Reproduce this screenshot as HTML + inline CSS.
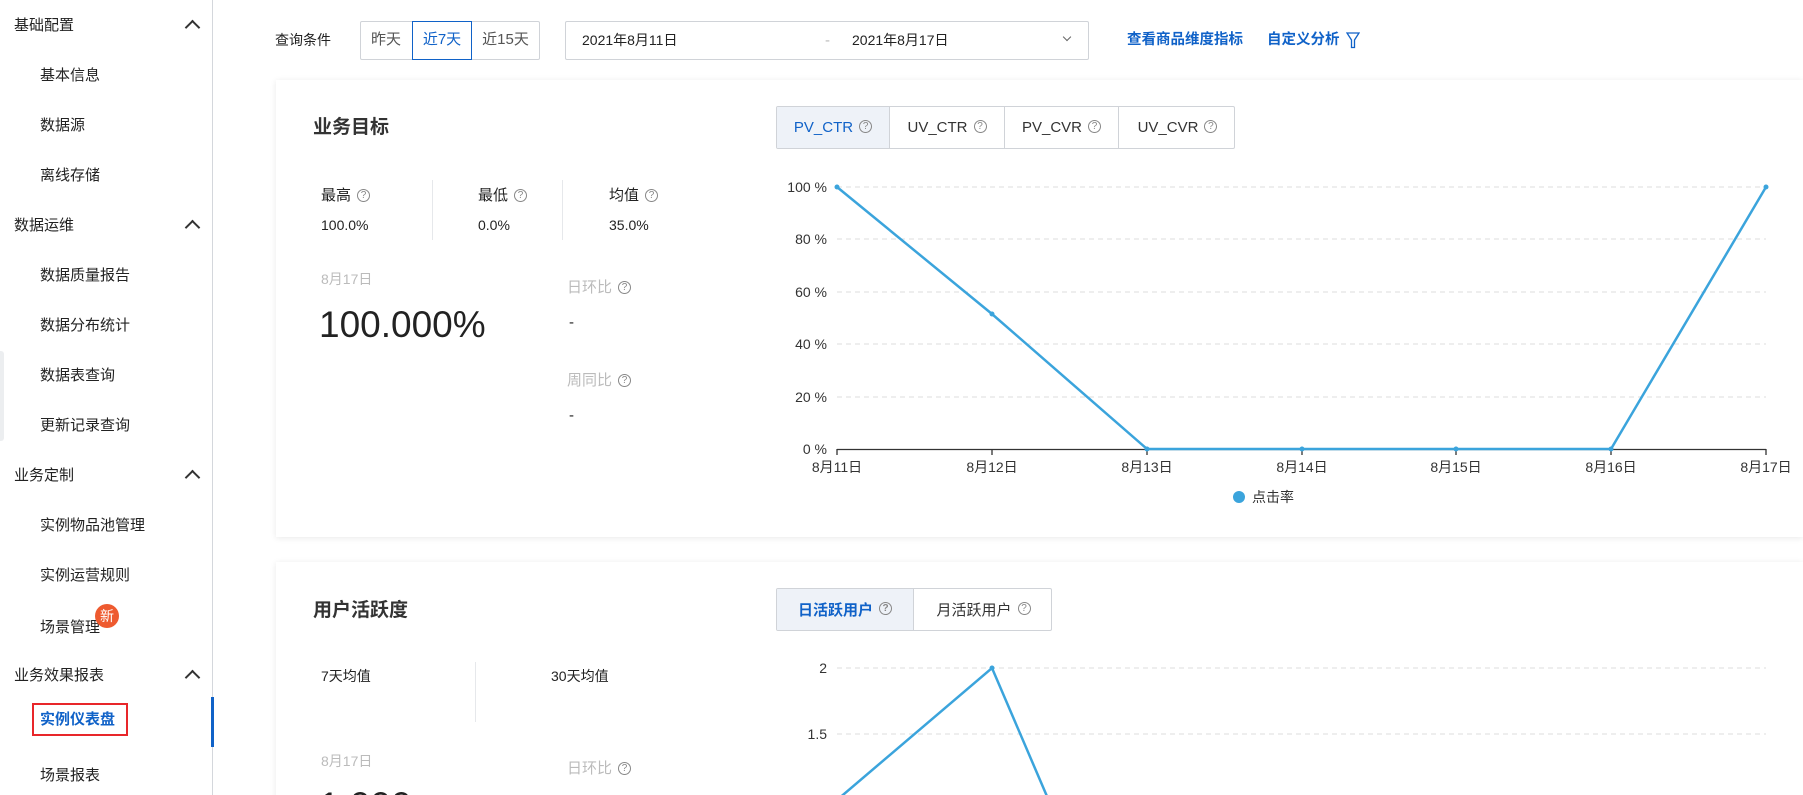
<!DOCTYPE html>
<html><head><meta charset="utf-8"><style>
*{margin:0;padding:0;box-sizing:border-box}
html,body{width:1803px;height:795px;overflow:hidden}
body{background:#fff;font-family:"Liberation Sans","Noto Sans CJK SC",sans-serif;color:#333;font-size:15px}
#w{position:relative;width:1803px;height:795px;overflow:hidden}
.a{position:absolute;white-space:nowrap;line-height:1}
.g{color:#222}
.chev{position:absolute;width:11px;height:11px;border-left:2px solid #333;border-top:2px solid #333;transform:rotate(45deg)}
.q{display:inline-block;width:13px;height:13px;border:1px solid #888;border-radius:50%;font-size:10px;line-height:11px;text-align:center;color:#888;vertical-align:middle;margin-left:6px;position:relative;top:-1px}
.card{position:absolute;left:276px;right:0;background:#fff;box-shadow:0 1px 6px rgba(0,0,0,0.09)}
.tab{position:absolute;top:0;height:100%;border-right:1px solid #d0d3d8;text-align:center;font-size:15px;color:#333;display:flex;align-items:center;justify-content:center}
.tabs{position:absolute;border:1px solid #d0d3d8;border-radius:2px;overflow:hidden}
.act{background:#eef2f8;color:#1062c8}
</style></head><body><div id="w">
<div class="card" style="top:80px;height:457px"></div>
<div class="card" style="top:562px;height:260px"></div>
<!-- sidebar -->
<div style="position:absolute;left:212px;top:0;width:1px;height:795px;background:#d4d7dc"></div>
<div style="position:absolute;left:211px;top:697px;width:3px;height:50px;background:#1062c8"></div>
<div style="position:absolute;left:0;top:351px;width:4px;height:90px;background:#eceef0;border-radius:0 3px 3px 0"></div>
<div class="a g" style="left:14px;top:18px">基础配置</div><div class="chev" style="left:187px;top:22px"></div>
<div class="a g" style="left:40px;top:68px">基本信息</div>
<div class="a g" style="left:40px;top:118px">数据源</div>
<div class="a g" style="left:40px;top:168px">离线存储</div>
<div class="a g" style="left:14px;top:218px">数据运维</div><div class="chev" style="left:187px;top:222px"></div>
<div class="a g" style="left:40px;top:268px">数据质量报告</div>
<div class="a g" style="left:40px;top:318px">数据分布统计</div>
<div class="a g" style="left:40px;top:368px">数据表查询</div>
<div class="a g" style="left:40px;top:418px">更新记录查询</div>
<div class="a g" style="left:14px;top:468px">业务定制</div><div class="chev" style="left:187px;top:472px"></div>
<div class="a g" style="left:40px;top:518px">实例物品池管理</div>
<div class="a g" style="left:40px;top:568px">实例运营规则</div>
<div class="a g" style="left:40px;top:620px">场景管理</div>
<div class="a" style="left:95px;top:604px;width:24px;height:24px;border-radius:50%;background:#ee5a2f;color:#fff;font-size:14px;line-height:24px;text-align:center">新</div>
<div class="a g" style="left:14px;top:668px">业务效果报表</div><div class="chev" style="left:187px;top:672px"></div>
<div class="a" style="left:32px;top:703px;width:96px;height:33px;border:2px solid #e8262a"></div>
<div class="a" style="left:40px;top:712px;color:#1062c8;font-weight:bold">实例仪表盘</div>
<div class="a g" style="left:40px;top:768px">场景报表</div>

<!-- query row -->
<div class="a g" style="left:275px;top:33px;font-size:14px">查询条件</div>
<div class="a" style="left:360px;top:21px;width:180px;height:39px;border:1px solid #d0d3d8;border-radius:2px"></div>
<div class="a" style="left:360px;top:32px;width:52px;text-align:center;color:#555">昨天</div>
<div class="a" style="left:412px;top:21px;width:60px;height:39px;border:1px solid #1062c8"></div>
<div class="a" style="left:412px;top:32px;width:60px;text-align:center;color:#1062c8">近7天</div>
<div class="a" style="left:472px;top:32px;width:67px;text-align:center;color:#555">近15天</div>
<div class="a" style="left:565px;top:21px;width:524px;height:39px;border:1px solid #d0d3d8;border-radius:2px"></div>
<div class="a g" style="left:582px;top:33px;font-size:14px">2021年8月11日</div>
<div class="a" style="left:825px;top:33px;color:#bbb">-</div>
<div class="a g" style="left:852px;top:33px;font-size:14px">2021年8月17日</div>
<div class="a" style="left:1064px;top:34px;width:6px;height:6px;border-right:1px solid #666;border-bottom:1px solid #666;transform:rotate(45deg)"></div>
<div class="a" style="left:1127px;top:33px;color:#1062c8;font-weight:bold;font-size:14.5px">查看商品维度指标</div>
<div class="a" style="left:1267px;top:33px;color:#1062c8;font-weight:bold;font-size:14.5px">自定义分析</div>
<svg class="a" style="left:1346px;top:32px" width="14" height="17" viewBox="0 0 14 17"><path d="M1 1H13L8.5 8V15.5H5.5V8Z" fill="none" stroke="#1062c8" stroke-width="1.3"/></svg>

<!-- card 1 -->
<div class="a" style="left:313px;top:118px;font-size:19px;font-weight:bold;color:#333">业务目标</div>
<div class="tabs" style="left:776px;top:106px;width:459px;height:43px">
<div class="tab act" style="left:0;width:113px">PV_CTR<span class="q">?</span></div>
<div class="tab" style="left:113px;width:115px">UV_CTR<span class="q">?</span></div>
<div class="tab" style="left:228px;width:114px">PV_CVR<span class="q">?</span></div>
<div class="tab" style="left:342px;width:117px;border-right:none">UV_CVR<span class="q">?</span></div>
</div>
<div class="a g" style="left:321px;top:188px">最高<span class="q">?</span></div>
<div class="a g" style="left:321px;top:218px;font-size:14px">100.0%</div>
<div class="a" style="left:432px;top:180px;width:1px;height:60px;background:#e6e8eb"></div>
<div class="a g" style="left:478px;top:188px">最低<span class="q">?</span></div>
<div class="a g" style="left:478px;top:218px;font-size:14px">0.0%</div>
<div class="a" style="left:562px;top:180px;width:1px;height:60px;background:#e6e8eb"></div>
<div class="a g" style="left:609px;top:188px">均值<span class="q">?</span></div>
<div class="a g" style="left:609px;top:218px;font-size:14px">35.0%</div>
<div class="a" style="left:321px;top:272px;color:#bbb;font-size:14px">8月17日</div>
<div class="a" style="left:319px;top:306px;font-size:37px;color:#222">100.000%</div>
<div class="a" style="left:567px;top:280px;color:#bbb">日环比<span class="q">?</span></div>
<div class="a g" style="left:569px;top:315px">-</div>
<div class="a" style="left:567px;top:373px;color:#bbb">周同比<span class="q">?</span></div>
<div class="a g" style="left:569px;top:408px">-</div>

<svg class="a" style="left:0;top:0" width="1803" height="795" font-family="Liberation Sans, Noto Sans CJK SC, sans-serif" font-size="14" fill="#333">
<g stroke="#ddd" stroke-dasharray="5,4" stroke-width="1">
<line x1="837" y1="187" x2="1766" y2="187"/><line x1="837" y1="239" x2="1766" y2="239"/><line x1="837" y1="292" x2="1766" y2="292"/><line x1="837" y1="344" x2="1766" y2="344"/><line x1="837" y1="397" x2="1766" y2="397"/>
<line x1="837" y1="668" x2="1766" y2="668"/><line x1="837" y1="734" x2="1766" y2="734"/>
</g>
<g text-anchor="end"><text x="827" y="192">100 %</text><text x="827" y="244">80 %</text><text x="827" y="297">60 %</text><text x="827" y="349">40 %</text><text x="827" y="402">20 %</text><text x="827" y="454">0 %</text>
<text x="827" y="673">2</text><text x="827" y="739">1.5</text></g>
<line x1="837" y1="449.5" x2="1766" y2="449.5" stroke="#333" stroke-width="1.3"/>
<g stroke="#333" stroke-width="1.3"><line x1="837" y1="449" x2="837" y2="455"/><line x1="992" y1="449" x2="992" y2="455"/><line x1="1147" y1="449" x2="1147" y2="455"/><line x1="1302" y1="449" x2="1302" y2="455"/><line x1="1456" y1="449" x2="1456" y2="455"/><line x1="1611" y1="449" x2="1611" y2="455"/><line x1="1766" y1="449" x2="1766" y2="455"/></g>
<g text-anchor="middle"><text x="837" y="472">8月11日</text><text x="992" y="472">8月12日</text><text x="1147" y="472">8月13日</text><text x="1302" y="472">8月14日</text><text x="1456" y="472">8月15日</text><text x="1611" y="472">8月16日</text><text x="1766" y="472">8月17日</text></g>
<polyline points="837,187 992,314 1147,449 1302,449 1456,449 1611,449 1766,187" fill="none" stroke="#3ba4dc" stroke-width="2.5"/>
<g fill="#3ba4dc"><circle cx="837" cy="187" r="2.5"/><circle cx="992" cy="314" r="2.5"/><circle cx="1147" cy="449" r="2.5"/><circle cx="1302" cy="449" r="2.5"/><circle cx="1456" cy="449" r="2.5"/><circle cx="1611" cy="449" r="2.5"/><circle cx="1766" cy="187" r="2.5"/></g>
<circle cx="1239" cy="497" r="6" fill="#3ba4dc"/><text x="1252" y="502" fill="#333">点击率</text>
<polyline points="837,800 992,668 1100,920" fill="none" stroke="#3ba4dc" stroke-width="2.5"/>
<circle cx="992" cy="668" r="2.5" fill="#3ba4dc"/>
</svg>

<!-- card 2 -->
<div class="a" style="left:313px;top:601px;font-size:19px;font-weight:bold;color:#333">用户活跃度</div>
<div class="tabs" style="left:776px;top:588px;width:276px;height:43px">
<div class="tab act" style="left:0;width:137px;font-weight:bold">日活跃用户<span class="q">?</span></div>
<div class="tab" style="left:137px;width:139px;border-right:none">月活跃用户<span class="q">?</span></div>
</div>
<div class="a g" style="left:321px;top:669px;font-size:14px">7天均值</div>
<div class="a" style="left:475px;top:662px;width:1px;height:60px;background:#e6e8eb"></div>
<div class="a g" style="left:551px;top:669px;font-size:14px">30天均值</div>
<div class="a" style="left:321px;top:754px;color:#bbb;font-size:14px">8月17日</div>
<div class="a" style="left:567px;top:761px;color:#bbb">日环比<span class="q">?</span></div>
<div class="a" style="left:319px;top:787px;font-size:37px;color:#222">1.000</div>
</div></body></html>
